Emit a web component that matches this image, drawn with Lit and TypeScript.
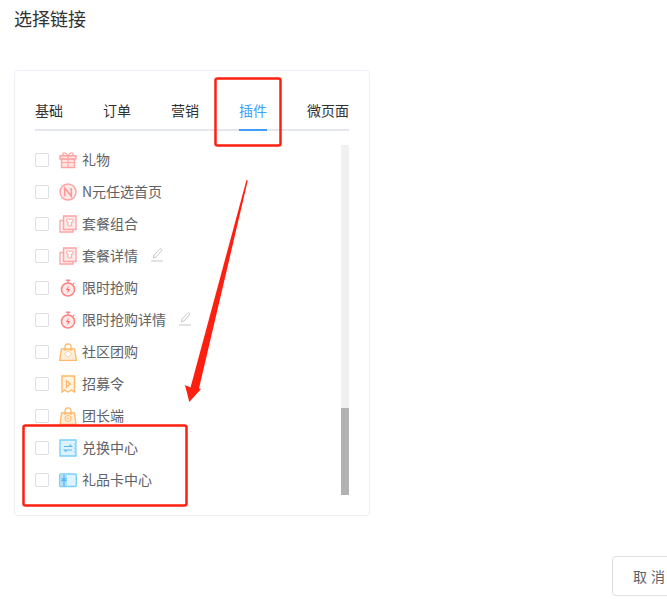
import { LitElement, html, css, svg } from "lit";
import { customElement } from "lit/decorators.js";

const P = "#ffa3a3";
const R = "#ff8585";
const O = "#ffb866";
const B = "#7acefc";

const icons: Record<string, unknown> = {
  gift: svg`<path d="M2.500 8h13v8.500h-13z" fill="#ffe3e3" stroke="${P}" stroke-width="1.400"/><path d="M1 4.800h16v3.200H1z" fill="#ffe3e3" stroke="${P}" stroke-width="1.400"/><path d="M9 4.800v11.700M2.500 11.500h13M9 4.800C7 2 5 1.200 4 2.200S5 4.800 6.500 4.800M9 4.800c2-2.800 4-3.600 5-2.600S13 4.800 11.500 4.800" fill="none" stroke="${P}" stroke-width="1.200"/>`,
  n: svg`<circle cx="9" cy="9" r="8" fill="#ffe9e9" stroke="${P}" stroke-width="1.400"/><path d="M5.800 13.200V5l6.400 8.200V5" fill="none" stroke="#ff9090" stroke-width="1.400"/>`,
  combo: svg`<path d="M1 5.500h3.500v9H14V17H1z" fill="#fff" stroke="${P}" stroke-width="1.300"/><path d="M4.500 1H17v13.500H4.500z" fill="#ffe9e9" stroke="${P}" stroke-width="1.400"/><path d="M7.300 5l2.200-1.200 1.300 1 1.300-1L14.300 5l-.7 2.200-1-.3v4H9v-4l-1 .3z" fill="#fff" stroke="${P}" stroke-width="1"/>`,
  timer: svg`<path d="M6.800 1.200h4.400M9 1.200V4M14 4l1.300 1.300" fill="none" stroke="${R}" stroke-width="1.400"/><circle cx="9" cy="10.500" r="6.500" fill="#ffeaea" stroke="${R}" stroke-width="1.600"/><path d="M10 6.300 6.800 11h2.100l-.8 3.700 3.100-4.700H9z" fill="#ff7070"/>`,
  shop: svg`<path d="M2.500 6h13l2 11.500H.5z" fill="#ffeed8" stroke="${O}" stroke-width="1.300"/><path d="M6 8V3.800a3 3 0 0 1 6 0V8" fill="none" stroke="${O}" stroke-width="1.300"/><path d="M9 7.800l3.700 3.200L9 14.500 5.300 11z" fill="#fff" stroke="#ffcd94" stroke-width="1"/>`,
  flag: svg`<path d="M3 1h12.500v16l-3-2-3.500 2-3.500-2-2.500 2z" fill="#fff3e2" stroke="${O}" stroke-width="1.400"/><path d="M7.500 5.800l4 3.200-4 3.200z" fill="none" stroke="${O}" stroke-width="1.300"/>`,
  bag: svg`<path d="M2.500 6h13L17 17.500H1z" fill="#ffeed8" stroke="${O}" stroke-width="1.300"/><path d="M6 8V3.800a3 3 0 0 1 6 0V8" fill="none" stroke="${O}" stroke-width="1.300"/><circle cx="9" cy="11.500" r="3" fill="none" stroke="#ffc283" stroke-width="1.200"/><circle cx="9" cy="11.500" r="1" fill="#ffc283"/>`,
  swap: svg`<path d="M1 1h16v3.500l-1 1 1 1v1.500l-1 1 1 1v1.500l-1 1 1 1V17H1z" fill="#dcf2ff" stroke="${B}" stroke-width="1.400"/><path d="M5 7.500h7.500l-2-1.700M13 11H5.500l2 1.700" fill="none" stroke="#56b8f5" stroke-width="1.200"/>`,
  card: svg`<rect x="0.700" y="3" width="16.600" height="12.500" rx="1" fill="#def3ff" stroke="${B}" stroke-width="1.400"/><path d="M1 3.500h7v11.500H1z" fill="#aee0fd"/><path d="M5 3.500v11.500M2.500 7.500l5 2.500M7.500 7.500l-5 2.500" fill="none" stroke="#4fb2f2" stroke-width="1.100"/>`,
};

const rows: Array<[string, string, boolean?]> = [
  ["gift", "礼物"],
  ["n", "N元任选首页"],
  ["combo", "套餐组合"],
  ["combo", "套餐详情", true],
  ["timer", "限时抢购"],
  ["timer", "限时抢购详情", true],
  ["shop", "社区团购"],
  ["flag", "招募令"],
  ["bag", "团长端"],
  ["swap", "兑换中心"],
  ["card", "礼品卡中心"],
];

const tabs = ["基础", "订单", "营销", "插件", "微页面"];

@customElement("app-root")
export class AppRoot extends LitElement {
  static styles = css`
    :host {
      display: block;
      position: relative;
      width: 667px;
      height: 599px;
      overflow: hidden;
      background: #fff;
      font-family: "Noto Sans CJK SC", "Liberation Sans", sans-serif;
    }
    .title {
      margin: 0;
      padding: 5px 14px 0;
      font-size: 18px;
      line-height: 26px;
      font-weight: 400;
      color: #303133;
    }
    .card {
      box-sizing: border-box;
      width: 356px;
      height: 446px;
      margin: 39px 0 0 14px;
      padding: 18px 20px 0;
      border: 1px solid #ebeef5;
      border-radius: 4px;
    }
    .tabs {
      display: flex;
      gap: 40px;
      width: 314px;
      border-bottom: 2px solid #e4e7ed;
    }
    .tab {
      height: 40px;
      line-height: 42px;
      font-size: 14px;
      color: #303133;
      margin-bottom: -2px;
      border-bottom: 2px solid transparent;
      white-space: nowrap;
    }
    .tab.active {
      color: #409eff;
      border-bottom-color: #409eff;
    }
    .body {
      display: flex;
      justify-content: space-between;
      width: 314px;
      margin-top: 13px;
    }
    .row {
      display: flex;
      align-items: center;
      height: 32px;
      font-size: 14px;
      color: #606266;
    }
    .label {
      margin-bottom: 2px;
    }
    .check {
      box-sizing: border-box;
      width: 14px;
      height: 14px;
      margin-right: 10px;
      border: 1px solid #dcdfe6;
      border-radius: 2px;
      background: #fff;
    }
    .icon {
      width: 18px;
      height: 18px;
      margin-right: 5px;
      flex: none;
    }
    .pencil {
      width: 14px;
      height: 14px;
      margin: -2px 0 0 12px;
    }
    .bar {
      width: 8px;
      height: 350px;
      margin-top: 1px;
      display: flex;
      flex-direction: column;
      justify-content: flex-end;
      background: #f0f0f0;
    }
    .thumb {
      height: 87px;
      background: #b2b2b2;
    }
    .footer {
      display: flex;
      justify-content: flex-end;
      margin: 40px -19px 0 0;
    }
    .btn {
      box-sizing: border-box;
      width: 74px;
      height: 40px;
      border: 1px solid #dcdfe6;
      border-radius: 4px;
      background: #fff;
      color: #606266;
      font: inherit;
      font-size: 14px;
      word-spacing: 1px;
      padding: 0;
      white-space: pre;
    }
    .marks {
      position: absolute;
      left: 0;
      top: 0;
      pointer-events: none;
    }
  `;

  render() {
    return html`
      <h1 class="title">选择链接</h1>
      <section class="card">
        <div class="tabs">
          ${tabs.map((t) => html`<div class="tab ${t === "插件" ? "active" : ""}">${t}</div>`)}
        </div>
        <div class="body">
          <div class="list">
            ${rows.map(
              ([ic, label, edit]) => html`
                <div class="row">
                  <span class="check"></span>
                  <svg class="icon" viewBox="0 0 18 18">${icons[ic]}</svg>
                  <span class="label">${label}</span>
                  ${edit
                    ? html`<svg class="pencil" viewBox="0 0 14 14" fill="none" stroke="#c8c8c8" stroke-width="1">
                        <path d="M3.500 10 4 7 9.500 1.200a1.200 1.200 0 0 1 1.800 0 1.300 1.300 0 0 1 0 1.800L6 9z" />
                        <path d="M1 13h12" />
                      </svg>`
                    : ""}
                </div>
              `
            )}
          </div>
          <div class="bar"><div class="thumb"></div></div>
        </div>
      </section>
      <div class="footer"><button class="btn">取 消</button></div>
      <svg class="marks" width="667" height="599" viewBox="0 0 667 599">
        <rect x="215.500" y="78.500" width="65" height="67" rx="2" fill="none" stroke="#ff1f10" stroke-width="2.500" />
        <rect x="23.500" y="425.500" width="163" height="80" rx="2" fill="none" stroke="#ff1f10" stroke-width="2.500" />
        <path d="M246.500 180 247.800 180.500 199 388.500 201 389 189.300 402 185 385 190.500 387.500z" fill="#ff1f10" />
      </svg>
    `;
  }
}
